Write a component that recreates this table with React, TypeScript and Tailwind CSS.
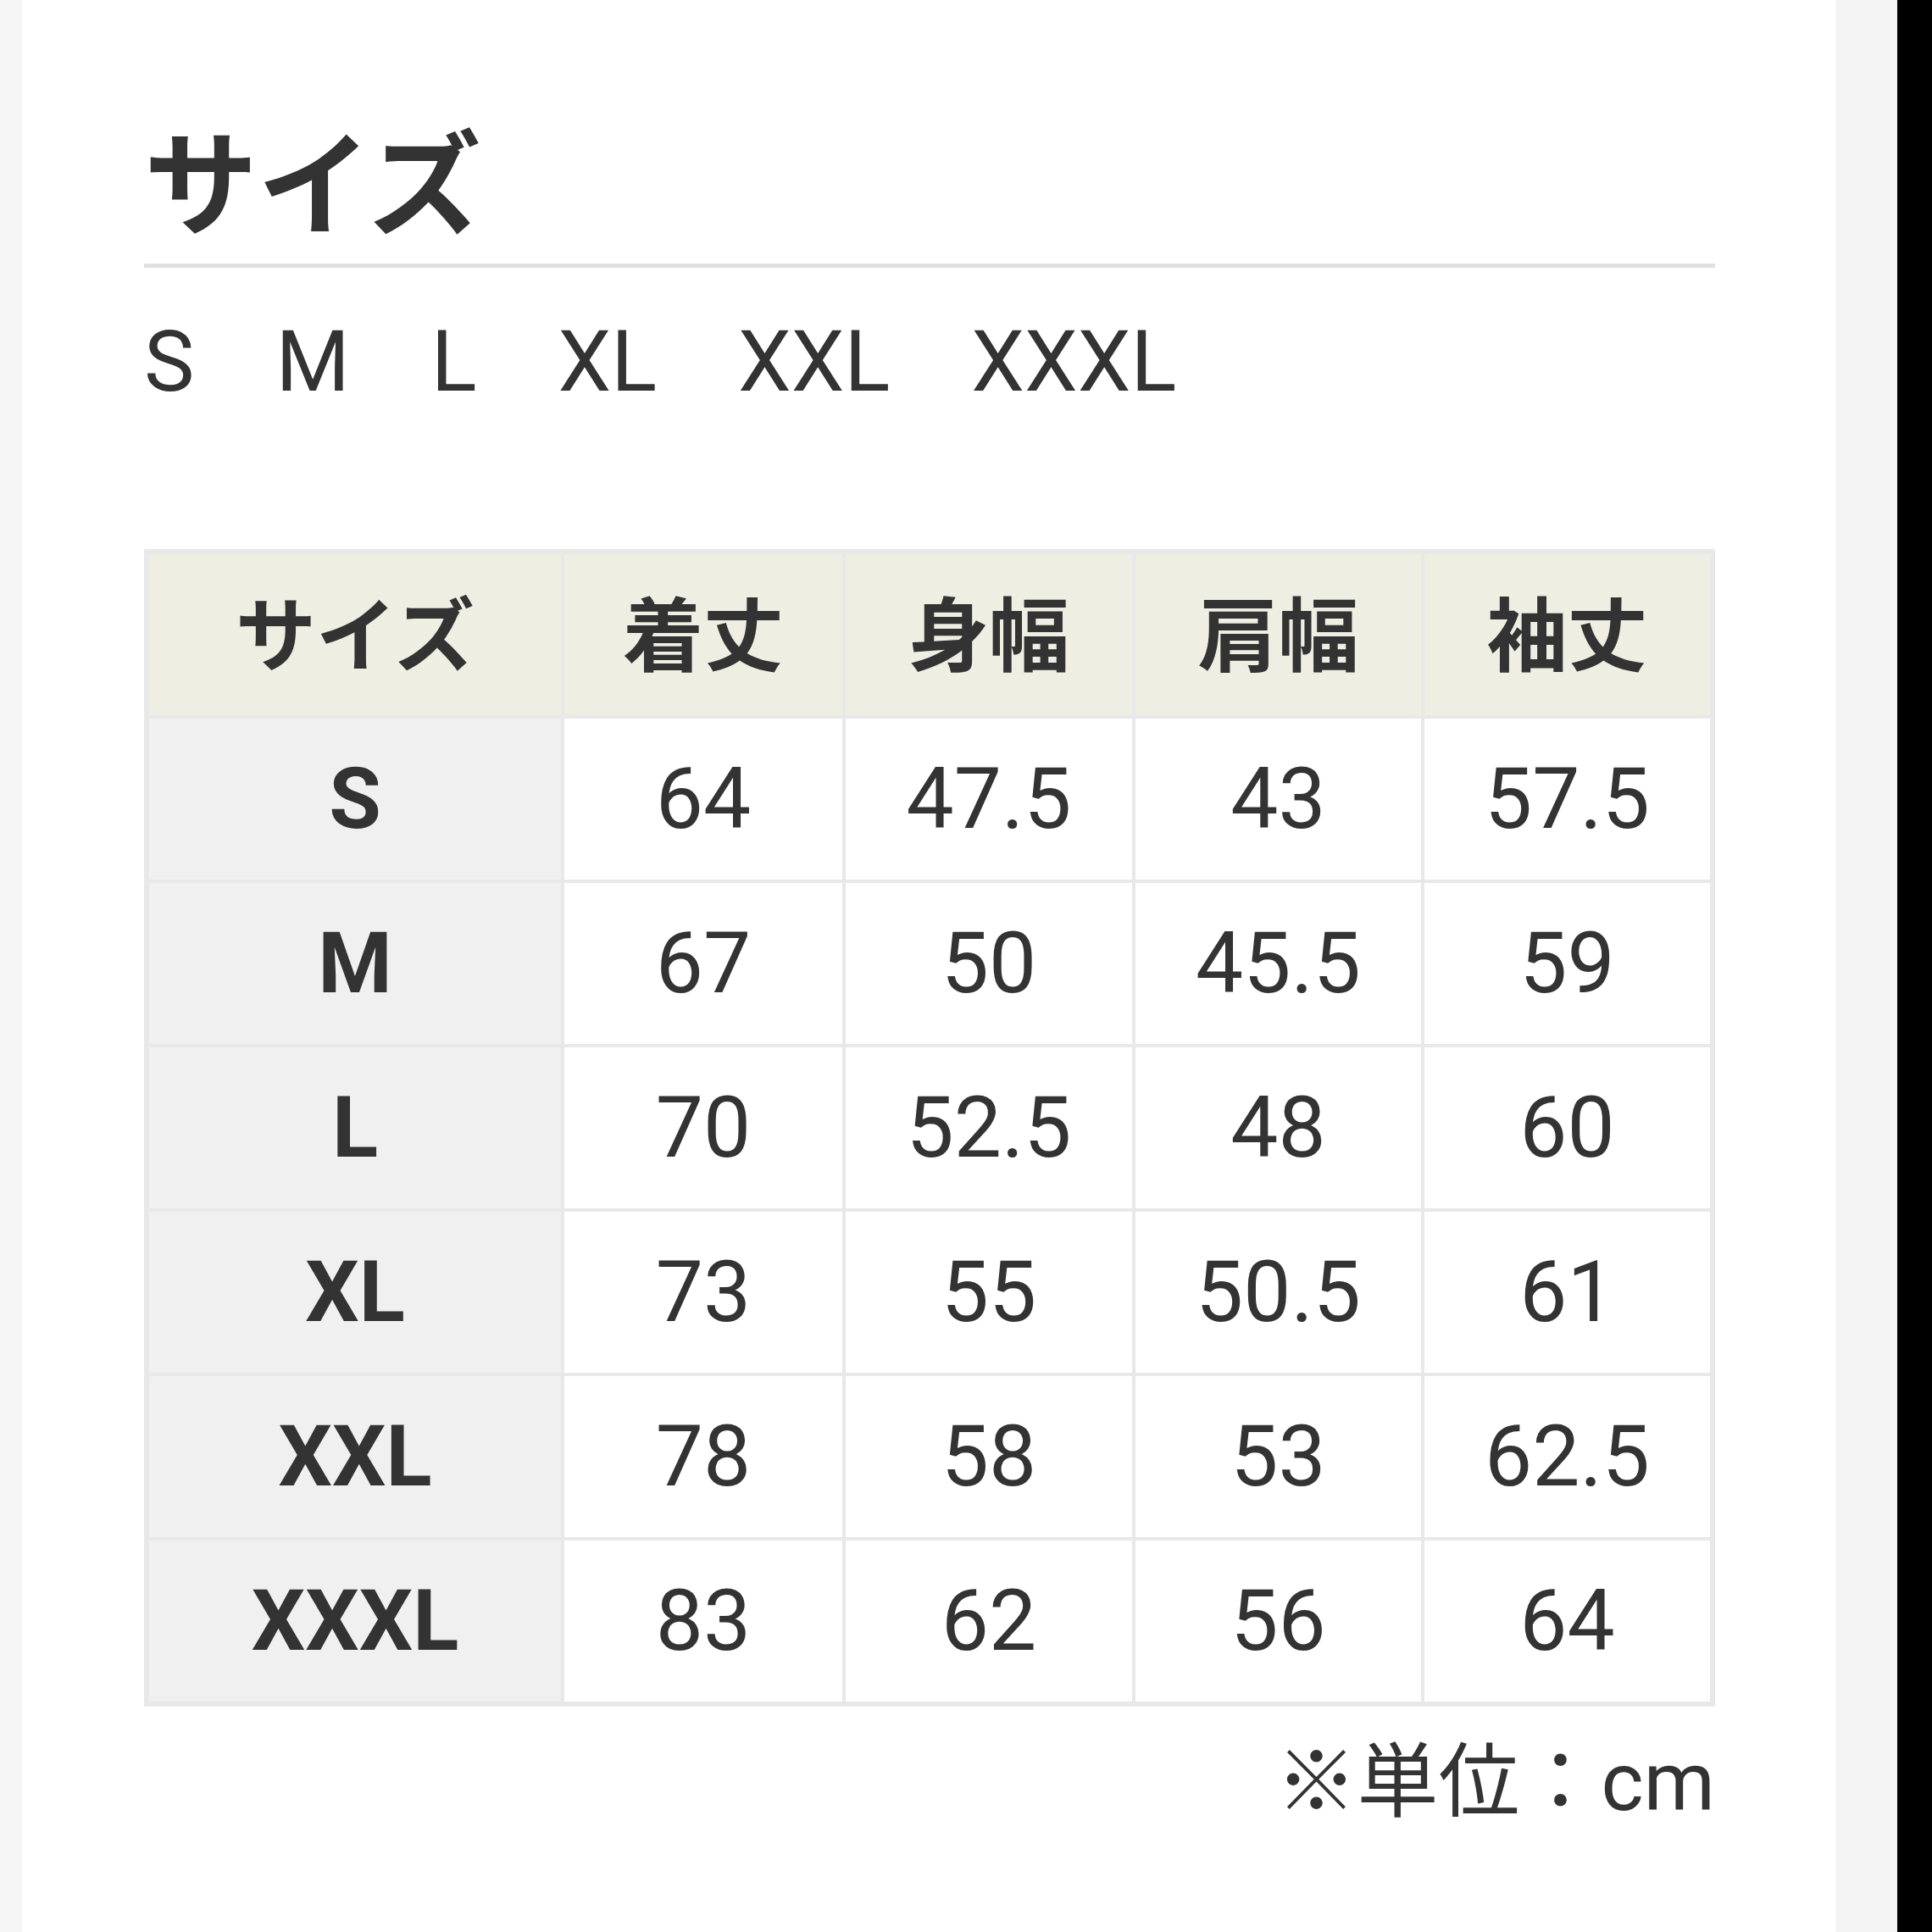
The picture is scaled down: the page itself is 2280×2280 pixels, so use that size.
const sizes = ["S", "M", "L", "XL", "XXL", "XXXL"];

const columns = ["サイズ", "着丈", "身幅", "肩幅", "袖丈"];

const rows: [string, string, string, string, string][] = [
  ["S", "64", "47.5", "43", "57.5"],
  ["M", "67", "50", "45.5", "59"],
  ["L", "70", "52.5", "48", "60"],
  ["XL", "73", "55", "50.5", "61"],
  ["XXL", "78", "58", "53", "62.5"],
  ["XXXL", "83", "62", "56", "64"],
];

const widths = ["w-[486px]", "w-[328px]", "w-[338px]", "w-[337px]", "w-[337px]"];

export default function App() {
  return (
    <div className="flex h-[2280px] w-[2280px] font-['Roboto','Noto_Sans_CJK_JP',sans-serif] text-[#333333]">
      <div className="w-[26px] bg-[#f5f5f5]" />
      <main className="flex-1 bg-white pl-[144px] pt-[155px]">
        <div className="w-[1854px]">
          <h2 className="border-b-[5px] border-[#e0e0e0] pb-[22px] text-[134px] font-bold leading-none">
            サイズ
          </h2>
          <ul className="mt-[61px] flex gap-[96px] text-[100px] leading-none">
            {sizes.map((s) => (
              <li key={s}>{s}</li>
            ))}
          </ul>
          <table className="mt-[171px] w-[1854px] border-separate border-spacing-[4px] border-2 border-[#e8e8e8] bg-[#e8e8e8]">
            <thead>
              <tr>
                {columns.map((c, i) => (
                  <th
                    key={c}
                    className={`${widths[i]} h-[190px] bg-[#eeeee2] p-0 pt-[6px] text-center text-[95px] font-bold leading-none`}
                  >
                    {c}
                  </th>
                ))}
              </tr>
            </thead>
            <tbody>
              {rows.map((r) => (
                <tr key={r[0]}>
                  <th className="h-[190px] bg-[#f0f0f0] p-0 text-center text-[100px] font-bold leading-none">
                    {r[0]}
                  </th>
                  {r.slice(1).map((v, i) => (
                    <td
                      key={i}
                      className="h-[190px] bg-white p-0 text-center text-[100px] leading-none"
                    >
                      {v}
                    </td>
                  ))}
                </tr>
              ))}
            </tbody>
          </table>
          <p className="mt-[41px] text-right text-[96px] leading-none">
            ※単位：cm
          </p>
        </div>
      </main>
      <div className="w-[73px] bg-[#f4f4f4]" />
      <div className="w-[41px] bg-black" />
    </div>
  );
}
